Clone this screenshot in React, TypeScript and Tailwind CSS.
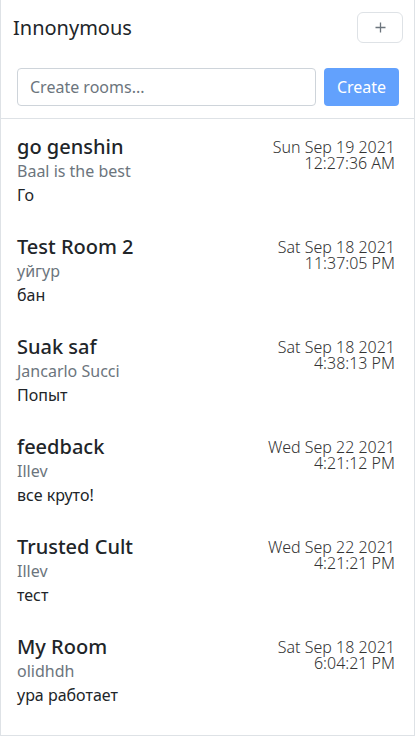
import React from 'react';

type Room = {
  id: number;
  name: string;
  author: string;
  lastMessage: string;
  date: string;
  time: string;
};

const rooms: Room[] = [
  { id: 1, name: 'go genshin', author: 'Baal is the best', lastMessage: 'Го', date: 'Sun Sep 19 2021', time: '12:27:36 AM' },
  { id: 2, name: 'Test Room 2', author: 'уйгур', lastMessage: 'бан', date: 'Sat Sep 18 2021', time: '11:37:05 PM' },
  { id: 3, name: 'Suak saf', author: 'Jancarlo Succi', lastMessage: 'Попыт', date: 'Sat Sep 18 2021', time: '4:38:13 PM' },
  { id: 4, name: 'feedback', author: 'Illev', lastMessage: 'все круто!', date: 'Wed Sep 22 2021', time: '4:21:12 PM' },
  { id: 5, name: 'Trusted Cult', author: 'Illev', lastMessage: 'тест', date: 'Wed Sep 22 2021', time: '4:21:21 PM' },
  { id: 6, name: 'My Room', author: 'olidhdh', lastMessage: 'ура работает', date: 'Sat Sep 18 2021', time: '6:04:21 PM' }
];

const RoomItem = ({ room }: { room: Room }) => {
  return (
    <li className="flex h-[100px] justify-between pt-4 pl-4 pr-[19px]">
      <div className="flex flex-col">
        <h5 className="text-[20px] font-medium leading-6 text-[#212529]">{room.name}</h5>
        <span className="text-base leading-6 text-[#6c757d]">{room.author}</span>
        <p className="text-base leading-6 text-[#212529]">{room.lastMessage}</p>
      </div>
      <time className="mt-1 flex flex-col items-end text-base font-light leading-4 text-[#333]">
        <span>{room.date}</span>
        <span>{room.time}</span>
      </time>
    </li>
  );
};

const App = () => {
  return (
    <div className="h-[737px] w-[417px] bg-white font-['Noto_Sans',sans-serif]">
      <div className="flex h-[736px] w-[415px] flex-col overflow-hidden border border-t-0 border-[#dee2e6]">
        <header className="border-b border-[#dee2e6] pb-3">
          <div className="flex items-center justify-between pt-3 pl-3 pr-[11px]">
            <h1 className="text-[20px] leading-6 text-[#212529]">Innonymous</h1>
            <button className="flex h-[31px] w-[46px] items-center justify-center rounded-md border border-[#dee2e6] bg-white">
              <svg width="11" height="11" viewBox="0 0 11 11">
                <path d="M5.5 0.5v10M0.5 5.5h10" stroke="#6c757d" strokeWidth="1.3" />
              </svg>
            </button>
          </div>
          <div className="mt-[25px] flex gap-2 pl-4 pr-[15px]">
            <input
              className="h-[38px] flex-1 rounded border border-[#ced4da] px-3 text-base text-[#212529] placeholder:text-[#6c757d] outline-none"
              placeholder="Create rooms..."
            />
            <button className="h-[38px] w-[75px] rounded bg-[#62a1fd] text-base text-white">Create</button>
          </div>
        </header>
        <ul className="flex flex-col">
          {rooms.map((room) => (
            <RoomItem key={room.id} room={room} />
          ))}
        </ul>
      </div>
    </div>
  );
};

export default App;
